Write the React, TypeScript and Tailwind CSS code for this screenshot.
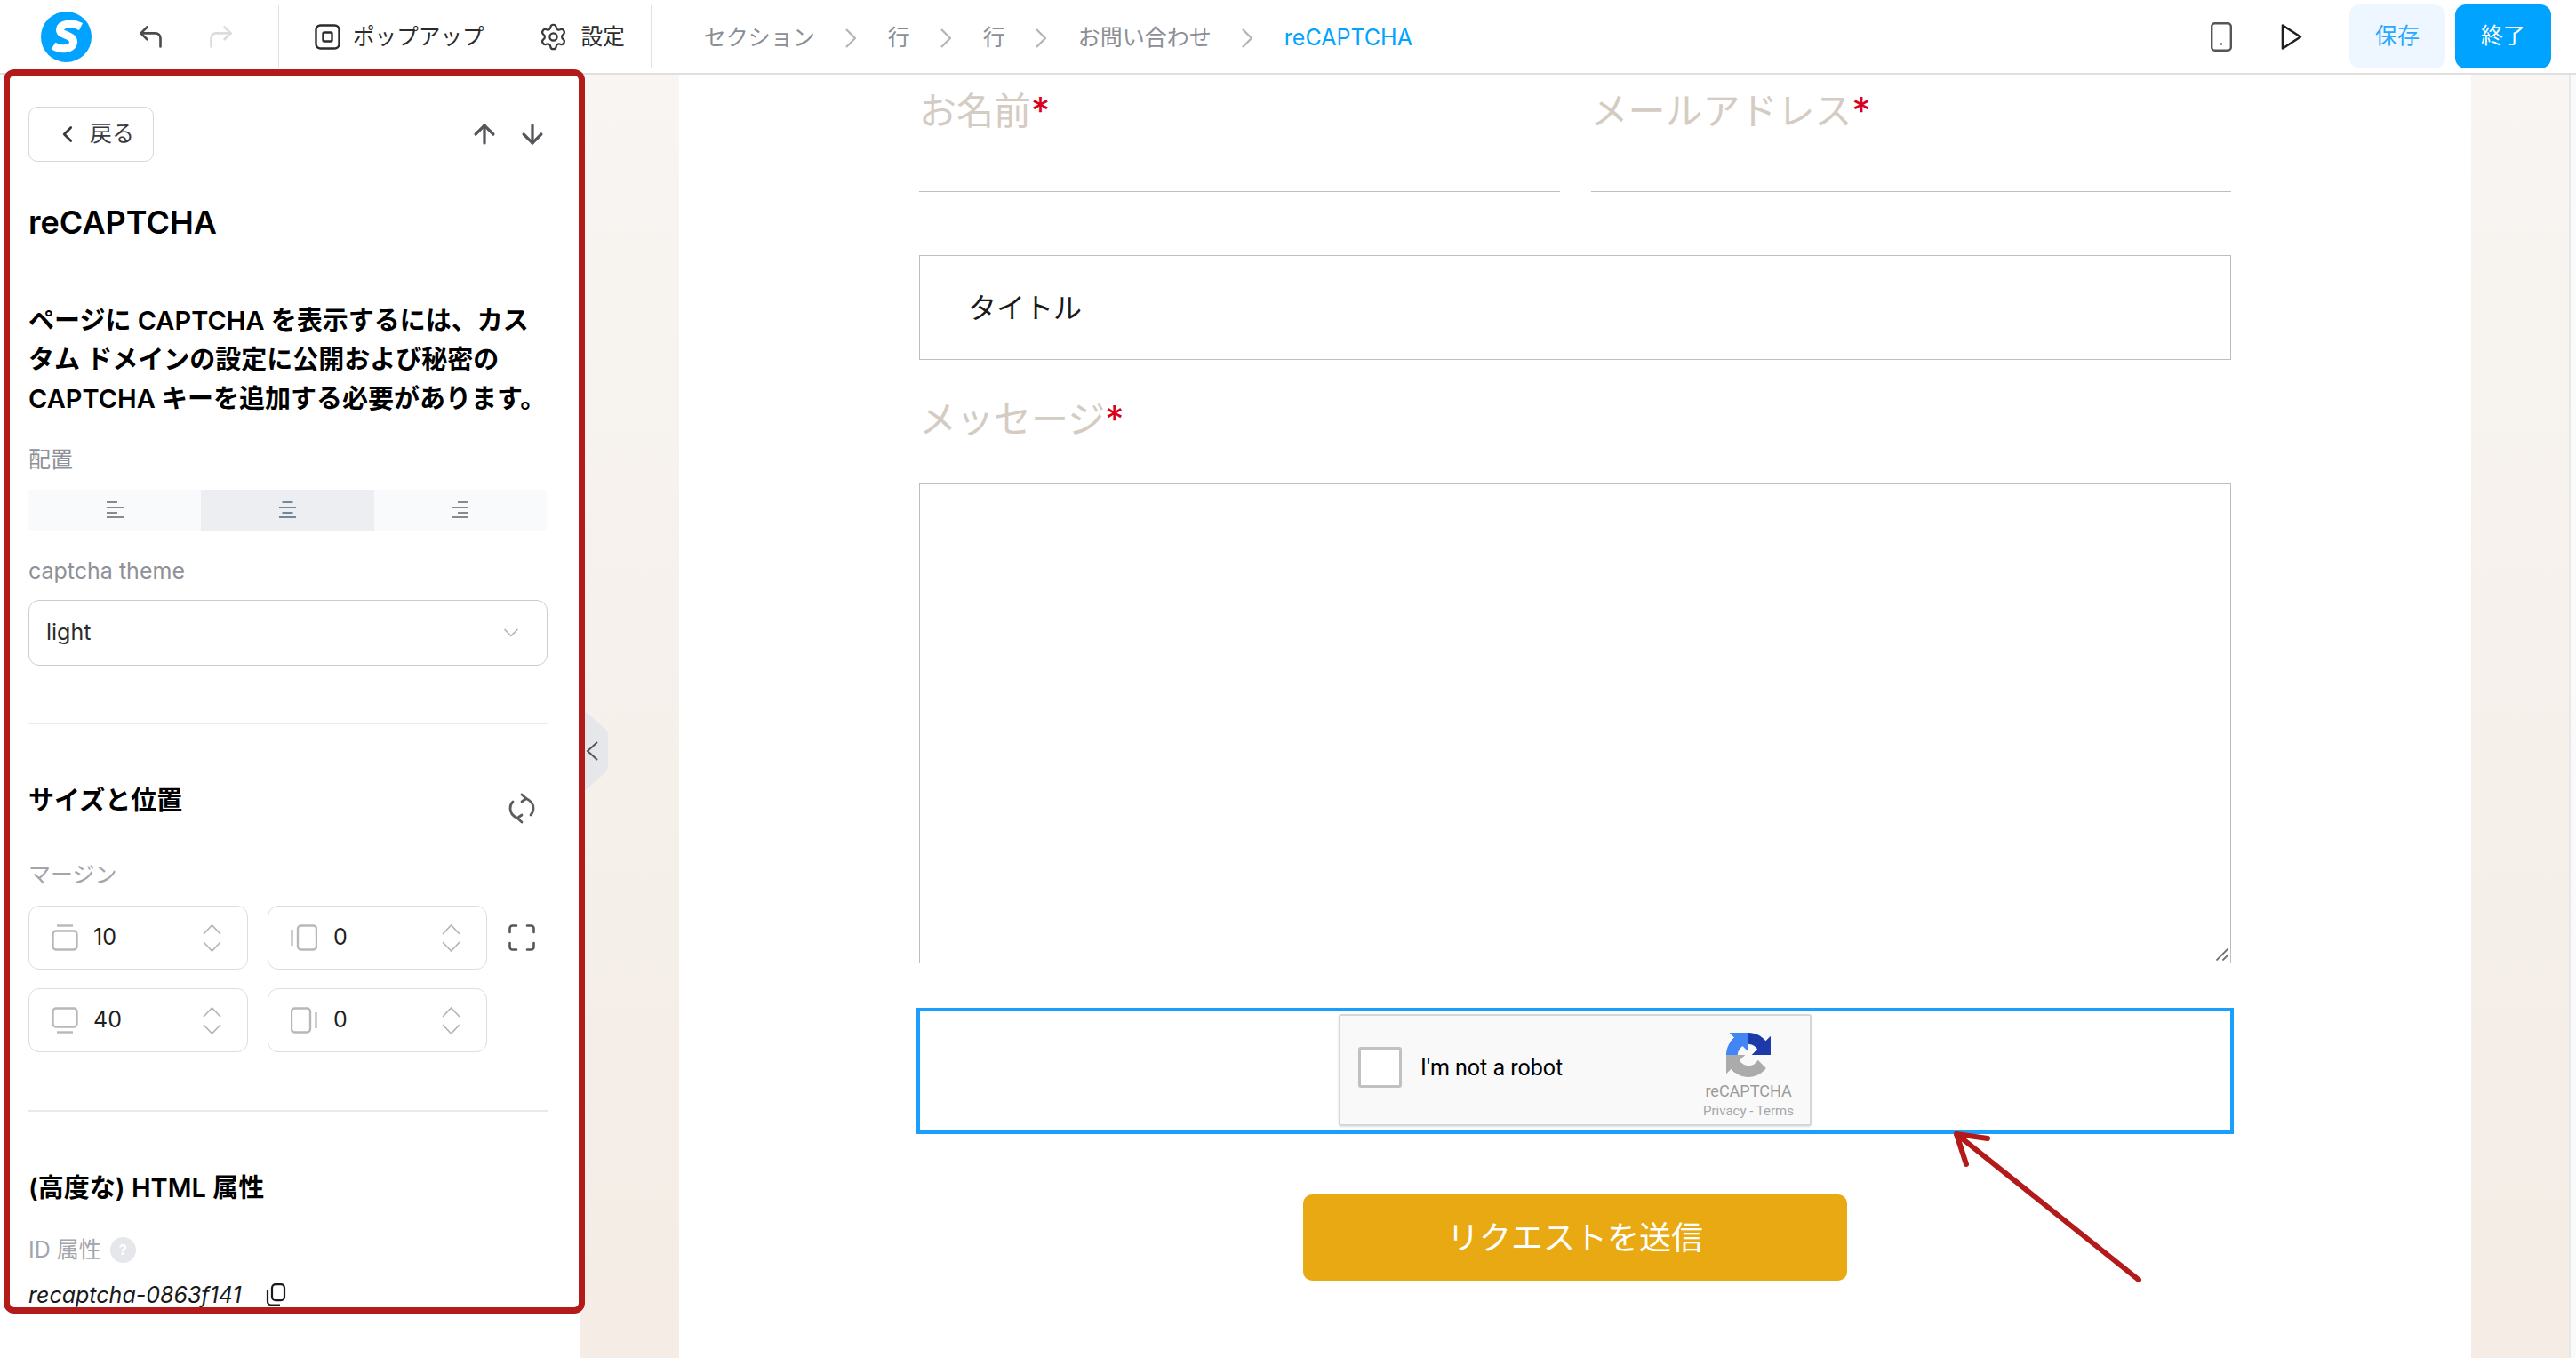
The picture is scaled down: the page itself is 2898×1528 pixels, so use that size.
import React from "react";
import { ArrowDown, ArrowUp, ChevronLeft, ChevronDown, CornerUpLeft, CornerUpRight, Settings } from "lucide-react";

const AlignBars = ({ align, color }: { align: "l" | "c" | "r"; color: string }) => {
  const x = (w: number) => (align === "l" ? 0 : align === "c" ? (19 - w) / 2 : 19 - w);
  return (
    <svg width="19" height="20" viewBox="0 0 19 20">
      {[[1, 12], [7, 19], [13, 12], [18, 19]].map(([y, w]) => (
        <rect key={y} x={x(w)} y={y - 1} width={w} height="2" fill={color} />
      ))}
    </svg>
  );
};

const SideIcon = ({ side }: { side: "t" | "l" | "b" | "r" }) => {
  const c = "#b8b8ba";
  if (side === "t")
    return (
      <svg width="30" height="30" viewBox="0 0 30 30" fill="none" stroke={c} strokeWidth="2.4">
        <path d="M6 1.5h18" />
        <rect x="1.5" y="7.5" width="27" height="21" rx="3.5" />
      </svg>
    );
  if (side === "b")
    return (
      <svg width="30" height="30" viewBox="0 0 30 30" fill="none" stroke={c} strokeWidth="2.4">
        <path d="M6 28.5h18" />
        <rect x="1.5" y="1.5" width="27" height="21" rx="3.5" />
      </svg>
    );
  if (side === "l")
    return (
      <svg width="30" height="30" viewBox="0 0 30 30" fill="none" stroke={c} strokeWidth="2.4">
        <path d="M1.5 6v18" />
        <rect x="8" y="1.5" width="21" height="27" rx="3.5" />
      </svg>
    );
  return (
    <svg width="30" height="30" viewBox="0 0 30 30" fill="none" stroke={c} strokeWidth="2.4">
      <path d="M28.5 6v18" />
      <rect x="1" y="1.5" width="21" height="27" rx="3.5" />
    </svg>
  );
};

const NumberBox = ({ side, value, textGap }: { side: "t" | "l" | "b" | "r"; value: string; textGap: string }) => (
  <div className="h-[72px] rounded-[12px] border border-[#dcdddf] flex items-center pl-[25px] pr-[29px]">
    <SideIcon side={side} />
    <span className={`${textGap} text-[25px] text-[#1f1f1f]`}>{value}</span>
    <svg className="ml-auto" width="21" height="31" viewBox="0 0 21 31" fill="none" stroke="#b4b5b7" strokeWidth="1.7">
      <path d="M1 11L10.500 1L20 11" />
      <path d="M1 20L10.500 30L20 20" />
    </svg>
  </div>
);

const FieldLabel = ({ text }: { text: string }) => (
  <div className="text-[42px] leading-[50px] font-normal text-[#d4ccc2]">
    {text}
    <span className="text-[#d9001b]">*</span>
  </div>
);

const Crumb = ({ children }: { children: React.ReactNode }) => (
  <span className="text-[25px] text-[#8b8e94]">{children}</span>
);
const CrumbSep = () => (
  <svg width="15" height="22" viewBox="0 0 15 22" fill="none" stroke="#b4b6ba" strokeWidth="2.4" strokeLinejoin="round">
    <path d="M2 1l10 10L2 21" />
  </svg>
);

export default function App() {
  return (
    <div className="relative w-[2898px] h-[1528px] overflow-hidden bg-white flex flex-col font-[Inter,'Noto_Sans_CJK_JP',sans-serif]">
      {/* header */}
      <header className="h-[84px] shrink-0 border-b-2 border-[#e0e0e0] flex items-center">
        <svg className="ml-[46px] shrink-0" width="57" height="57" viewBox="0 0 57 57">
          <circle cx="28.5" cy="28.5" r="28.5" fill="#00a3ff" />
          <path d="M45 17C36 12.500 22 13 21.500 20.500C21 27 37 26 36.500 34.500C36 43 22 43.500 14 38.500" fill="none" stroke="#fff" strokeWidth="9" />
        </svg>
        <CornerUpLeft className="ml-[50px] text-[#4b4b4d]" size={33} strokeWidth={1.9} />
        <CornerUpRight className="ml-[46px] text-[#dcdcde]" size={33} strokeWidth={1.9} />
        <div className="ml-[48px] w-px h-[71px] bg-[#e2e2e2]" />
        <svg className="ml-[40px]" width="29" height="29" viewBox="0 0 29 29" fill="none" stroke="#2b2b2d" strokeWidth="2.4">
          <rect x="1.500" y="1.500" width="26" height="26" rx="5" />
          <rect x="9.500" y="9.500" width="10" height="10" rx="1.500" />
        </svg>
        <span className="ml-[14px] text-[24.600px] text-[#2b2b2d]">ポップアップ</span>
        <Settings className="ml-[61px] text-[#3a3a3c]" size={33} strokeWidth={1.6} />
        <span className="ml-[15px] text-[24.600px] text-[#2b2b2d]">設定</span>
        <div className="ml-[29px] w-px h-[71px] bg-[#e2e2e2]" />
        <nav className="ml-[59px] pt-[3px] flex items-center gap-[33.500px]">
          <Crumb>セクション</Crumb>
          <CrumbSep />
          <Crumb>行</Crumb>
          <CrumbSep />
          <Crumb>行</Crumb>
          <CrumbSep />
          <Crumb>お問い合わせ</Crumb>
          <CrumbSep />
          <span className="text-[25px] text-[#00a3ff]">reCAPTCHA</span>
        </nav>
        <div className="ml-auto flex items-center pr-[28px]">
          <svg width="24" height="33" viewBox="0 0 24 33" fill="none" stroke="#55565a" strokeWidth="2.4">
            <rect x="1.200" y="1.200" width="21.600" height="30.600" rx="3.500" />
            <circle cx="12" cy="24.500" r="1.200" fill="#55565a" stroke="none" />
          </svg>
          <svg className="ml-[55px]" width="24" height="31" viewBox="0 0 24 31" fill="none" stroke="#1f1f1f" strokeWidth="2.600" strokeLinejoin="round">
            <path d="M2 2.500v26L22 15.500z" />
          </svg>
          <button className="ml-[53px] w-[108px] h-[72px] rounded-[12px] bg-[#eef7ff] text-[#2aa7ff] text-[25px]">保存</button>
          <button className="ml-[11px] w-[108px] h-[72px] rounded-[12px] bg-[#00a3ff] text-white text-[25px]">終了</button>
        </div>
      </header>

      <div className="flex-1 flex min-h-0">
        {/* side panel */}
        <aside className="w-[653px] shrink-0 border-r border-[#dcdcdc] bg-white">
          <div className="h-[1388px] overflow-hidden px-[32px]">
            <div className="mt-[36px] flex items-center justify-between">
              <button className="w-[141px] h-[62px] rounded-[10px] border border-[#d6d7d9] flex items-center pl-[28px] text-[#3a3a3c]">
                <ChevronLeft size={30} strokeWidth={2.2} />
                <span className="ml-[10px] text-[25px]">戻る</span>
              </button>
              <div className="flex items-center gap-[20px] pr-[4px]">
                <ArrowUp className="text-[#55565a]" size={34} strokeWidth={2.3} />
                <ArrowDown className="text-[#55565a]" size={34} strokeWidth={2.3} />
              </div>
            </div>
            <h1 className="mt-[43px] text-[36px] leading-[50px] font-semibold text-black">reCAPTCHA</h1>
            <p className="mt-[64px] text-[29px] leading-[44px] font-semibold text-black whitespace-nowrap">
              ページに CAPTCHA を表示するには、カス
              <br />
              タム ドメインの設定に公開および秘密の
              <br />
              CAPTCHA キーを追加する必要があります。
            </p>
            <div className="mt-[31px] text-[25px] leading-[30px] text-[#8e9197]">配置</div>
            <div className="mt-[19px] h-[46px] w-[583px] rounded-[4px] bg-[#f9fafb] grid grid-cols-3 overflow-hidden">
              <div className="flex items-center justify-center"><AlignBars align="l" color="#8a8a8c" /></div>
              <div className="flex items-center justify-center bg-[#eceef1]"><AlignBars align="c" color="#74869b" /></div>
              <div className="flex items-center justify-center"><AlignBars align="r" color="#8a8a8c" /></div>
            </div>
            <div className="mt-[30px] text-[25px] leading-[30px] text-[#8e9197]">captcha theme</div>
            <div className="mt-[18px] h-[74px] w-[584px] rounded-[12px] border border-[#cbccce] flex items-center pl-[19px] pr-[26px]">
              <span className="text-[25px] text-[#2b2b2d]">light</span>
              <ChevronDown className="ml-auto text-[#b4b5b7]" size={28} strokeWidth={1.5} />
            </div>
            <div className="mt-[64px] h-[2px] w-[584px] bg-[#e8e9eb]" />
            <div className="mt-[66px] flex items-start justify-between w-[570px]">
              <h2 className="text-[29px] leading-[40px] font-semibold text-black">サイズと位置</h2>
              <svg className="mt-[11px]" width="30" height="35" viewBox="0 0 30 35" fill="none" stroke="#5b5c60" strokeWidth="2.800" strokeLinecap="round" strokeLinejoin="round">
                <path d="M20 6.500C24.500 8.500 28 12.500 28 17.500c0 3-1 5.500-3 7.500" />
                <path d="M10 28.500C5.500 26.500 2 22.500 2 17.500c0-3 1-5.500 3-7.500" />
                <path d="M15 2l5 4.500-5 3.500" />
                <path d="M15 33l-5-4.500 5-3.500" />
              </svg>
            </div>
            <div className="mt-[42px] text-[25px] leading-[30px] text-[#a3a5aa]">マージン</div>
            <div className="mt-[20px] grid grid-cols-[247px_247px_1fr] gap-x-[22px] gap-y-[21px] items-center">
              <NumberBox side="t" value="10" textGap="ml-[17px]" />
              <NumberBox side="l" value="0" textGap="ml-[18px]" />
              <svg className="ml-[2px]" width="30" height="30" viewBox="0 0 30 30" fill="none" stroke="#55565a" strokeWidth="2.600" strokeLinecap="round">
                <path d="M1.500 9V4.500a3 3 0 0 1 3-3H9" />
                <path d="M21 1.500h4.500a3 3 0 0 1 3 3V9" />
                <path d="M28.500 21v4.500a3 3 0 0 1-3 3H21" />
                <path d="M9 28.500H4.500a3 3 0 0 1-3-3V21" />
              </svg>
              <NumberBox side="b" value="40" textGap="ml-[17px]" />
              <NumberBox side="r" value="0" textGap="ml-[18px]" />
            </div>
            <div className="mt-[65px] h-[2px] w-[584px] bg-[#e8e9eb]" />
            <h2 className="mt-[66px] text-[29px] leading-[40px] font-semibold text-black">(高度な) HTML 属性</h2>
            <div className="mt-[34px] flex items-center text-[25px] leading-[30px] text-[#a3a5aa]">
              ID 属性
              <span className="ml-[10px] w-[29px] h-[29px] rounded-full bg-[#e5e7eb] text-white text-[16px] font-bold flex items-center justify-center">?</span>
            </div>
            <div className="mt-[21px] flex items-center">
              <span className="text-[25px] leading-[30px] italic text-[#1a1a1a]">recaptcha-0863f141</span>
              <svg className="ml-[26px]" width="24" height="26" viewBox="0 0 24 26" fill="none" stroke="#1a1a1a" strokeWidth="2.200">
                <rect x="8" y="1.200" width="14" height="18" rx="4" />
                <path d="M3 7v13.500a4 4 0 0 0 4 4h10" />
              </svg>
            </div>
          </div>
        </aside>

        {/* canvas */}
        <main className="flex-1 min-w-0 flex bg-linear-to-b from-[#f8f5f2] to-[#f4ece5]">
          <div className="ml-[111px] w-[2016px] bg-white px-[270px]">
            <div className="grid grid-cols-2 gap-x-[35px]">
              <div className="h-[132px] pt-[16px] border-b border-[#c4bcb2]"><FieldLabel text="お名前" /></div>
              <div className="h-[132px] pt-[16px] border-b border-[#c4bcb2]"><FieldLabel text="メールアドレス" /></div>
            </div>
            <div className="mt-[71px] h-[118px] border border-[#c4bcb2] flex items-center pl-[54px] pt-[2px] text-[32px] text-[#1a1a1a]">タイトル</div>
            <div className="mt-[42px]"><FieldLabel text="メッセージ" /></div>
            <div className="relative mt-[47px] h-[540px]">
              <textarea readOnly className="block w-full h-full border border-[#c4bcb2] resize-none" />
              <svg className="absolute right-[3px] bottom-[3px]" width="14" height="14" viewBox="0 0 14 14" fill="none" stroke="#6b6b6b" strokeWidth="1.800">
                <path d="M0.500 13.500L13.500 0.500" />
                <path d="M7.500 13.500L13.500 7.500" />
              </svg>
            </div>
            <div className="mt-[50px] -mx-[3px] h-[142px] border-4 border-[#1a9fff] flex justify-center pt-[3px]">
              <div className="w-[532px] h-[126px] rounded-[3px] border-2 border-[#d6d6d6] bg-[#f9f9f9] shadow-sm flex relative">
                <div className="ml-[20px] mt-[35px] w-[49px] h-[46px] rounded-[3px] border-[3px] border-[#c1c1c1] bg-white" />
                <span className="ml-[21px] mt-[37px] h-[44px] leading-[44px] text-[25px] text-black font-[Roboto,sans-serif]">I'm not a robot</span>
                <div className="ml-auto mr-[18px] flex flex-col items-center font-[Roboto,sans-serif]">
                  <svg className="mt-[19px]" width="56" height="50" viewBox="0 0 64 64">
                    <path d="M64 31.955l-.033-1.37V4.687l-7.16 7.16C50.948 4.674 42.033.093 32.05.093c-10.4 0-19.622 4.96-25.458 12.64l11.736 11.86a15.55 15.55 0 0 1 4.754-5.334c2.05-1.6 4.952-2.906 8.968-2.906.485 0 .86.057 1.135.163 4.976.393 9.288 3.14 11.828 7.124l-8.307 8.307L64 31.953" fill="#1c3aa9" />
                    <path d="M31.862.094l-1.37.033H4.594l7.16 7.16C4.58 13.147 0 22.06 0 32.046c0 10.4 4.96 19.622 12.64 25.458L24.5 45.768a15.55 15.55 0 0 1-5.334-4.754c-1.6-2.05-2.906-4.952-2.906-8.968 0-.485.057-.86.163-1.135.393-4.976 3.14-9.288 7.124-11.828l8.307 8.307L31.86.094" fill="#4285f4" />
                    <path d="M.001 32.045l.033 1.37v25.898l7.16-7.16c5.86 7.173 14.774 11.754 24.76 11.754 10.4 0 19.622-4.96 25.458-12.64l-11.736-11.86a15.55 15.55 0 0 1-4.754 5.334c-2.05 1.6-4.952 2.906-8.968 2.906-.485 0-.86-.057-1.135-.163-4.976-.393-9.288-3.14-11.828-7.124l8.307-8.307L.001 32.045" fill="#ababab" />
                  </svg>
                  <span className="mt-[5px] text-[18px] leading-[22px] text-[#9b9b9b]">reCAPTCHA</span>
                  <span className="mt-[1px] text-[15px] leading-[20px] text-[#a6a6a6]">Privacy - Terms</span>
                </div>
              </div>
            </div>
            <button className="mt-[68px] mx-auto block w-[612px] h-[97px] rounded-[10px] bg-[#e9a913] text-[36px] text-white">リクエストを送信</button>
          </div>
          <div className="ml-[110px] flex-1 border-l-2 border-[#e8e8e8] bg-[#fafafa]" />
        </main>
      </div>

      {/* collapse tab over the canvas */}
      <svg className="absolute left-[653px] top-[796px]" width="32" height="98" viewBox="0 0 32 98">
        <path d="M0 0L27 23Q31 27 31 33V65Q31 70 27 74L0 98z" fill="#e5e7eb" />
        <path d="M19 39L8 49L19 59" fill="none" stroke="#55565a" strokeWidth="2" />
      </svg>

      {/* annotation: red outline round the panel */}
      <div className="absolute left-[4px] top-[78px] w-[654px] h-[1400px] rounded-[12px] border-[7px] border-[#b31b1b] pointer-events-none" />

      {/* annotation: red arrow */}
      <svg className="absolute left-[2170px] top-[1260px] pointer-events-none" width="260" height="190" viewBox="0 0 260 190" fill="none" stroke="#b31b1b" strokeWidth="6" strokeLinecap="round" strokeLinejoin="round">
        <path d="M236 180L31 16" />
        <path d="M66 21L31 16L42 50" />
      </svg>
    </div>
  );
}
